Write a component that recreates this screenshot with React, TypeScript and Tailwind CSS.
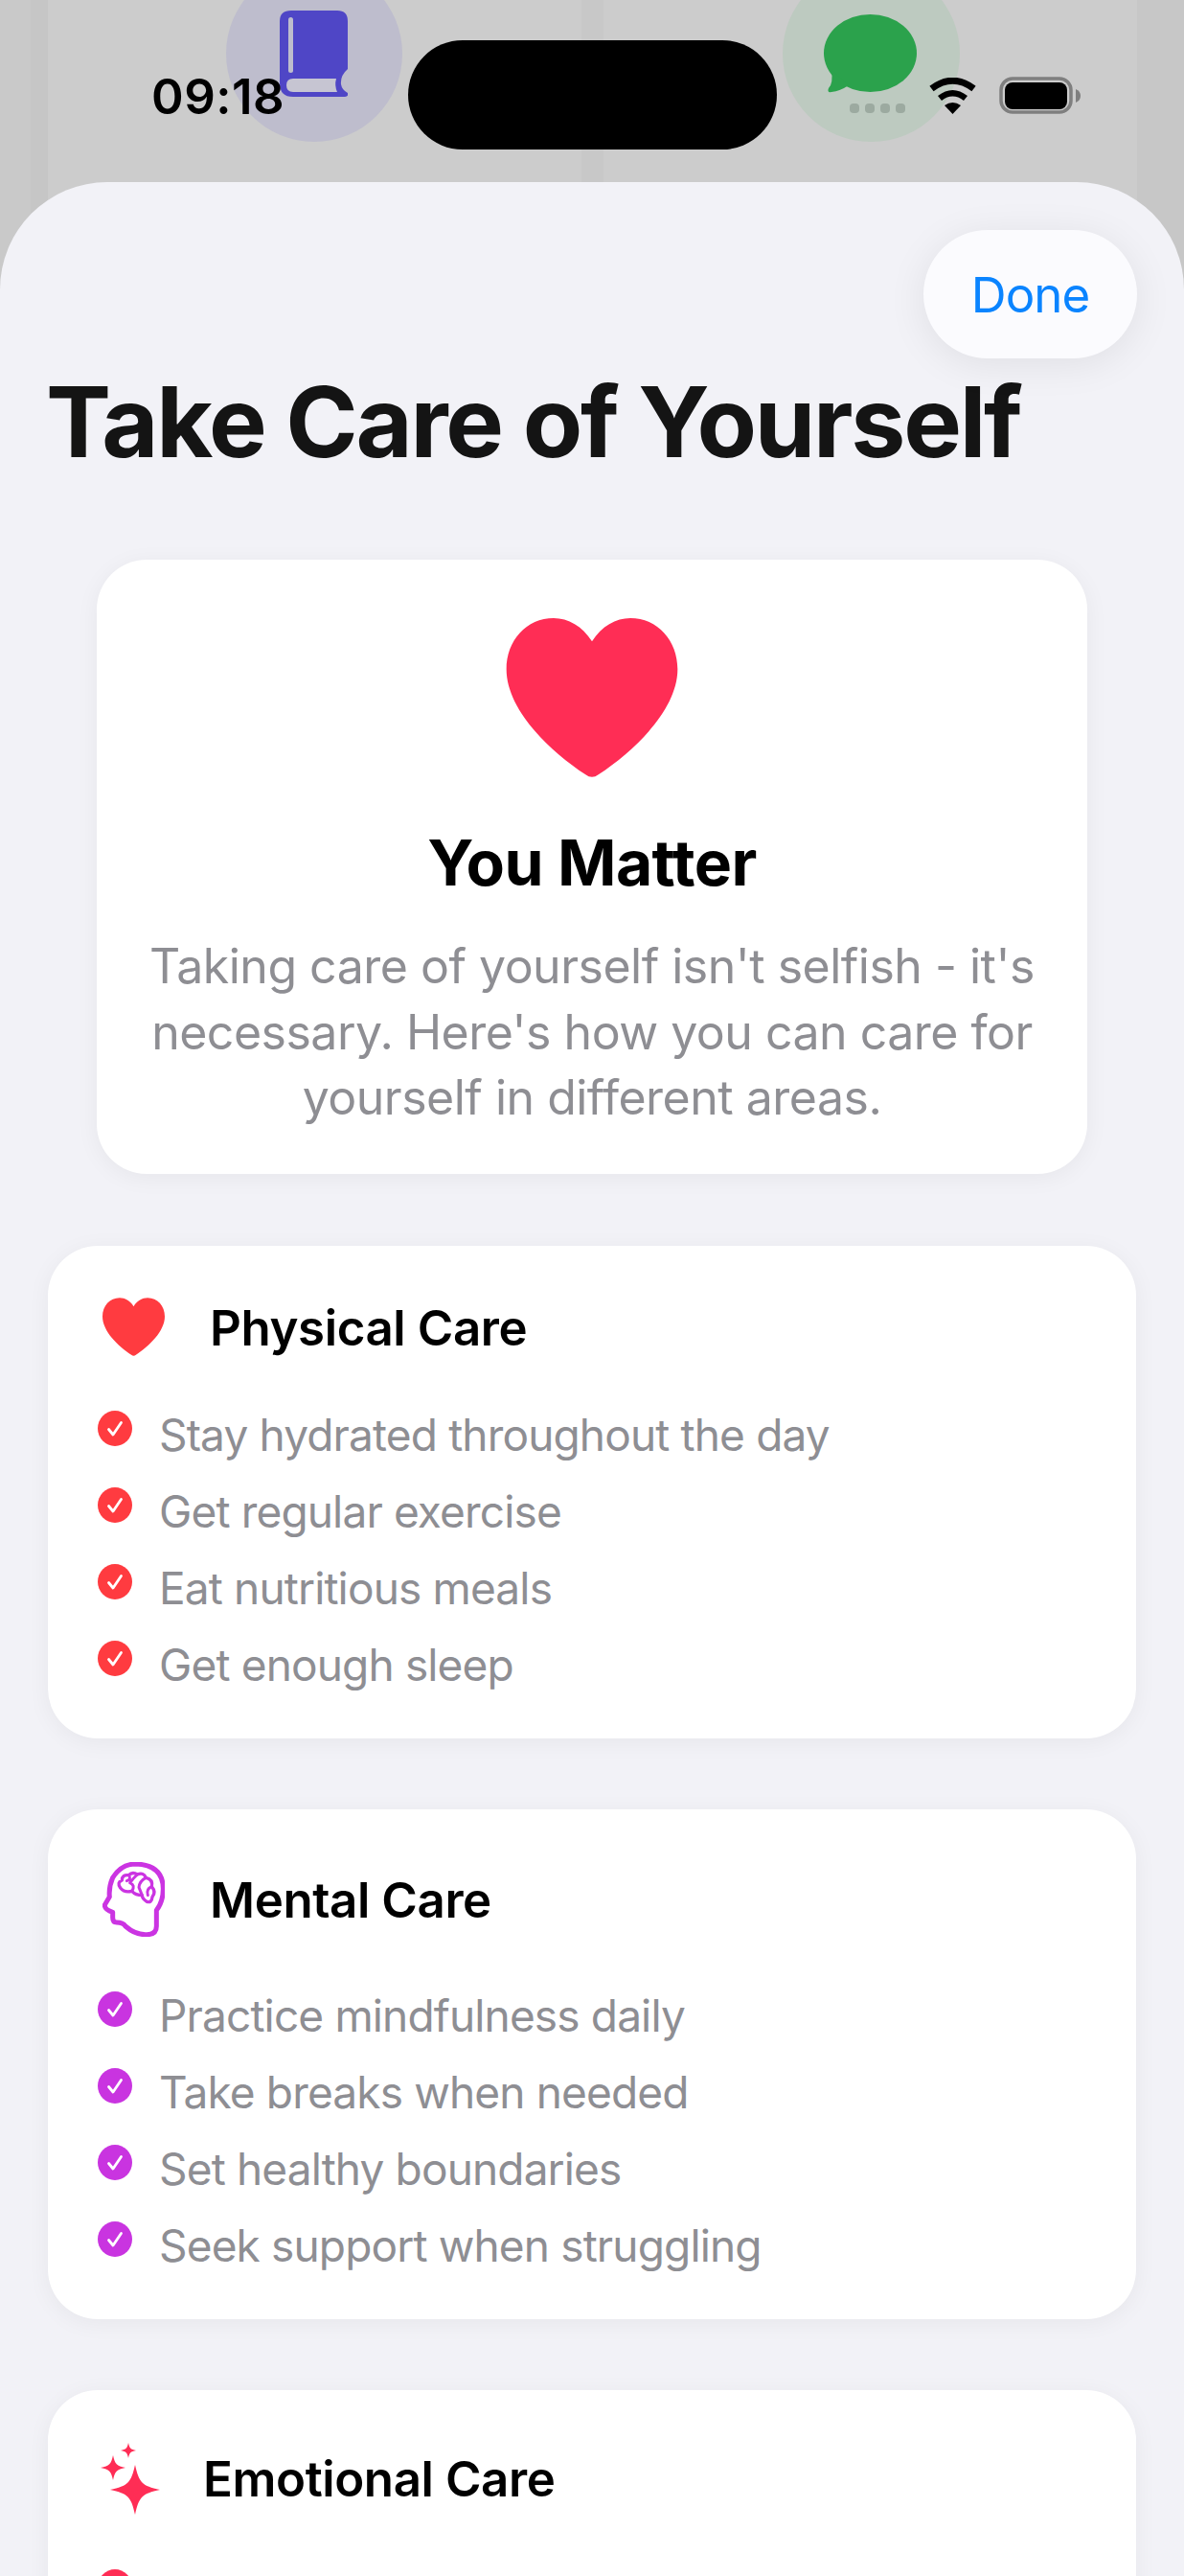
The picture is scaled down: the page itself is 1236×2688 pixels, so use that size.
import React from "react";

function star(cx: number, cy: number, r: number) {
  const a = r * 0.16;
  const b = r * 0.28;
  return `M${cx} ${cy - r} C${cx + a} ${cy - b} ${cx + b} ${cy - a} ${cx + r} ${cy} C${cx + b} ${cy + a} ${cx + a} ${cy + b} ${cx} ${cy + r} C${cx - a} ${cy + b} ${cx - b} ${cy + a} ${cx - r} ${cy} C${cx - b} ${cy - a} ${cx - a} ${cy - b} ${cx} ${cy - r}Z`;
}

const HEART =
  "M355 118 C325 70 280 45 235 45 C150 45 87 115 87 205 C87 330 220 460 335 535 C348 545 362 545 375 535 C490 460 623 330 623 205 C623 115 560 45 475 45 C430 45 385 70 355 118Z";

function Bullet({ color, children }: { color: string; children: React.ReactNode }) {
  return (
    <div className="flex items-start gap-[28px]">
      <svg width="36" height="37" viewBox="0 0 36 37" className="mt-[3px] shrink-0">
        <ellipse cx="18" cy="18.5" rx="18" ry="18.5" fill={color} />
        <path d="M11.5 19.5 L16 25 L24.5 12.5" fill="none" stroke="#fff" strokeWidth="2.8" strokeLinecap="round" strokeLinejoin="round" />
      </svg>
      <span className="text-[46px] leading-[56px] text-[#8e8e93] tracking-[-0.85px]">{children}</span>
    </div>
  );
}

function Card({
  icon,
  title,
  color,
  items,
  row,
}: {
  icon: React.ReactNode;
  title: string;
  color: string;
  items: string[];
  row: string;
}) {
  return (
    <section className="rounded-[52px] bg-white pt-[54px] pb-[49px] pl-[52px] shadow-[0_4px_24px_rgba(0,0,0,0.05)]">
      <div className={`flex items-center pl-[3px] ${row}`}>
        {icon}
        <h2 className="mt-[2px] text-[51px] leading-[60px] font-semibold text-black tracking-[-0.4px]">{title}</h2>
      </div>
      <div className="mt-[53px] flex flex-col gap-[24px]">
        {items.map((t) => (
          <Bullet key={t} color={color}>
            {t}
          </Bullet>
        ))}
      </div>
    </section>
  );
}

export default function App() {
  return (
    <div
      className="relative h-[2688px] w-[1236px] overflow-hidden bg-[#cccccc]"
      style={{ fontFamily: "Inter, 'Liberation Sans', sans-serif" }}
    >
      <div className="absolute left-0 top-0 h-[310px] w-[32px] bg-[#c9c9c9]" />
      <div className="absolute left-[32px] top-0 h-[310px] w-[18px] bg-[#c6c6c6]" />
      <div className="absolute left-[607px] top-0 h-[190px] w-[23px] bg-[#c8c8c8]" />
      <div className="absolute left-[1187px] top-0 h-[310px] w-[49px] bg-[#c7c7c7]" />

      {/* Top strip */}
      <header className="relative h-[190px]">
        <div className="absolute left-[236px] top-[-36px] h-[184px] w-[184px] rounded-full bg-[#bebdcd]" />
        <div className="absolute left-[817px] top-[-36px] h-[184px] w-[185px] rounded-full bg-[#bdcac0]" />
        <svg className="absolute left-[292px] top-[11px]" width="71" height="90" viewBox="0 0 71 90">
          <path d="M12 0H60Q71 0 71 11V61Q63 68 64 77Q65 83 71 86Q72 90 68 90H14Q0 90 0 76V11Q0 0 12 0Z" fill="#4f46c6" />
          <rect x="9" y="7" width="5" height="58" rx="2.5" fill="#bebdcd" />
          <path d="M14 71H59Q57 78 60 85H14Q7 85 7 78Q7 71 14 71Z" fill="#c6c5d2" />
        </svg>
        <svg className="absolute left-[860px] top-[15px]" width="97" height="82" viewBox="0 0 97 82">
          <ellipse cx="48.5" cy="40.5" rx="48.5" ry="40.5" fill="#2ba24c" />
          <path d="M8 58Q10 72 5 77Q3 82 8 81Q17 80 26 74Z" fill="#2ba24c" />
        </svg>
        <div className="absolute left-[887px] top-[108px] flex gap-[6px]">
          <span className="h-[10px] w-[10px] rounded-[4px] bg-[#9caaa0]" />
          <span className="h-[10px] w-[10px] rounded-[4px] bg-[#9caaa0]" />
          <span className="h-[10px] w-[10px] rounded-[4px] bg-[#9caaa0]" />
          <span className="h-[10px] w-[10px] rounded-[4px] bg-[#9caaa0]" />
        </div>
        <span className="absolute left-[158px] top-[71px] text-[51px] leading-[60px] font-semibold text-black tracking-[0.5px]">
          09:18
        </span>
        <div className="absolute left-[426px] top-[42px] h-[114px] w-[385px] rounded-[57px] bg-black" />
        <svg className="absolute left-[969px] top-[81px]" width="51" height="38" viewBox="0 0 51 38">
          <path d="M3.5 11.5Q25.5 -5 47.5 11.5" fill="none" stroke="#000" strokeWidth="7" />
          <path d="M12 21.5Q25.5 11 39 21.5" fill="none" stroke="#000" strokeWidth="6.5" />
          <path d="M17 29Q25.5 23 34 29L25.5 38Z" fill="#000" />
        </svg>
        <svg className="absolute left-[1043px] top-[80px]" width="86" height="40" viewBox="0 0 86 40">
          <rect x="2" y="2" width="73" height="35" rx="12" fill="none" stroke="#7f7f7f" strokeWidth="3.5" />
          <rect x="6" y="6" width="65" height="28" rx="8" fill="#000" />
          <path d="M80 13Q85 15 85 20Q85 25 80 27Z" fill="#7f7f7f" />
        </svg>
      </header>

      {/* Sheet */}
      <main className="relative h-[2498px] rounded-t-[112px] bg-[#f2f2f7] px-[50px] pt-[190px]">
        <button className="absolute right-[49px] top-[50px] flex h-[134px] w-[223px] items-center justify-center rounded-[67px] bg-[#fbfbfe] pt-[2px] text-[51px] text-[#0a84ff] shadow-[0_6px_40px_rgba(0,0,0,0.08)] tracking-[-1px]">
          Done
        </button>

        <h1 className="-ml-[2px] text-[102px] leading-[120px] font-bold text-[#141414] tracking-[-2.25px]">Take Care of Yourself</h1>

        <section className="mx-[51px] mt-[84px] flex flex-col items-center rounded-[52px] bg-white pt-[61px] pb-[45px] shadow-[0_4px_24px_rgba(0,0,0,0.05)]">
          <svg width="180" height="166" viewBox="87 45 536 498">
            <path d={HEART} fill="#ff2d55" />
          </svg>
          <h2 className="mt-[49px] text-[66px] leading-[80px] font-bold text-black tracking-[-0.6px]">You Matter</h2>
          <p className="mt-[34px] w-[960px] text-center text-[50px] leading-[68.5px] text-[#8e8e93] tracking-[-0.5px]">
            Taking care of yourself isn't selfish - it's necessary. Here's how you can care for yourself in different areas.
          </p>
        </section>

        <div className="mt-[75px] flex flex-col gap-[74px]">
          <Card
            title="Physical Care"
            color="#ff3b40"
            row="h-[62px] gap-[47px]"
            icon={
              <svg width="65" height="61" viewBox="87 45 536 498" className="ml-[2px]">
                <path d={HEART} fill="#ff3b40" />
              </svg>
            }
            items={["Stay hydrated throughout the day", "Get regular exercise", "Eat nutritious meals", "Get enough sleep"]}
          />
          <Card
            title="Mental Care"
            color="#c934e0"
            row="h-[80px] gap-[47px]"
            icon={
              <svg width="65" height="78" viewBox="36 21 195 234" className="ml-[2px]" fill="none" stroke="#cb34e2" strokeLinejoin="round" strokeLinecap="round">
                <path strokeWidth="15" d="M205 172V222Q205 248 175 248Q140 250 108 222Q100 210 80 210Q68 210 68 195V178Q42 170 43 155L58 130Q55 100 68 70Q95 27 140 27Q226 30 226 105Q226 145 205 172Z" />
                <path strokeWidth="10" d="M92 102Q80 85 97 78Q97 60 118 62Q130 50 145 60Q165 52 172 70Q195 75 190 98Q205 115 192 130Q190 150 175 145Q160 135 160 125Q140 125 128 112Q105 118 92 102Z" />
                <path strokeWidth="9" d="M118 62Q128 75 112 80M145 60Q132 72 122 86Q140 94 128 112M172 70Q152 80 150 100L160 125M190 98Q172 105 178 125" />
              </svg>
            }
            items={["Practice mindfulness daily", "Take breaks when needed", "Set healthy boundaries", "Seek support when struggling"]}
          />
          <Card
            title="Emotional Care"
            color="#ff2d55"
            row="h-[77px] gap-[45px]"
            icon={
              <svg width="62" height="75" viewBox="0 0 62 75" fill="#ff2d55">
                <path d={star(36, 49, 26)} />
                <path d={star(13, 26, 13)} />
                <path d={star(29, 8, 8)} />
              </svg>
            }
            items={["Express your feelings"]}
          />
        </div>
      </main>
    </div>
  );
}
